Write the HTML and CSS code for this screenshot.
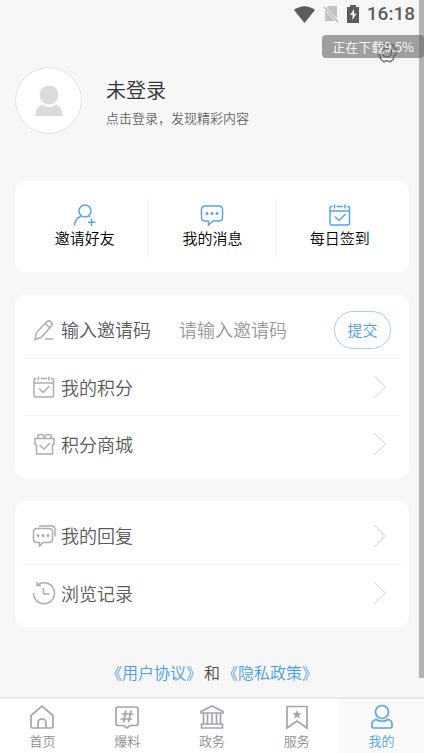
FILE: index.html
```html
<!DOCTYPE html>
<html lang="zh-CN">
<head>
<meta charset="utf-8">
<meta name="viewport" content="width=device-width, initial-scale=1">
<title>我的</title>
<link rel="stylesheet" href="styles.css">
</head>
<body>
<svg class="defs" aria-hidden="true">
  <symbol id="chevron" viewBox="0 0 14 24"><path d="M1 1l11.500 11L1 23"/></symbol>
  <symbol id="calendar" viewBox="0 0 24 24"><path d="M4.500 3.500H3.500Q2 3.500 2 5V20.500q0 1.500 1.500 1.500H20q1.500 0 1.500-1.500V5Q21.500 3.500 20 3.500H19M2 8h19.500M8.500 3.500H15M6.500 1.500v4M17 1.500v4M7 13.500l4 4 6.500-6.500"/></symbol>
</svg>
<div class="app">
  <header class="status">
    <svg width="21" height="17" viewBox="0 0 21 17"><path d="M0 4Q10.500-3.500 21 4L10.500 17z" fill="#5c5c5c"/></svg>
    <svg class="sim" width="16" height="18" viewBox="0 0 16 18"><path d="M5 1h9v15H2V5z" fill="#c3c3c3"/><path d="M0 1l15 16" stroke="#f7f7f7" stroke-width="3"/><path d="M1 2l14 15" stroke="#b0b0b0" stroke-width="1.200"/></svg>
    <svg width="12" height="18" viewBox="0 0 12 18"><path d="M3 0h6v2h3v16H0V2h3z" fill="#5c5c5c"/><path d="M7 4L3 10h2.500v5L9.500 8.500H7z" fill="#f7f7f7"/></svg>
    <span class="time">16:18</span>
  </header>
  <button class="settings" aria-label="设置">
    <svg width="24" height="24" viewBox="0 0 24 24"><path d="M9 2.500Q12 4.500 15 2.500L18 4q0 3.500 3.500 4.500v4.500Q18 14.500 18.500 18l-3.500 3q-3-2.500-6 0l-3.500-3Q6 14.500 2.500 13V8.500Q6 7.500 6 4z"/><circle cx="12" cy="11.500" r="4.500"/></svg>
  </button>
  <div class="toast" role="status">正在下载9.5%</div>
  <main>
    <section class="profile">
      <div class="avatar"><svg width="30" height="32" viewBox="0 0 30 32"><circle cx="15" cy="10" r="9.500"/><path d="M1 31q1-9 7-11.500 7 5 14 0Q28 22 29 31z"/></svg></div>
      <div class="who">
        <h1>未登录</h1>
        <p>点击登录，发现精彩内容</p>
      </div>
    </section>
    <section class="card shortcuts">
      <a href="#"><svg width="24" height="24" viewBox="0 0 24 24"><circle cx="12" cy="8" r="6"/><path d="M1.500 22.500q0-6.500 7-9.500M15.500 13l1.500 1M18.500 15.500v7.500M15 19.200h7.500"/></svg>邀请好友</a>
      <a href="#"><svg width="24" height="24" viewBox="0 0 24 24"><path d="M5 3h14q3.500 0 3.500 3.500v8q0 3.500-3.500 3.500h-6L8.500 22v-4H5q-3.500 0-3.500-3.500v-8Q1.500 3 5 3z"/><path class="dots" d="M7 10.500h.01M12 10.500h.01M17 10.500h.01"/></svg>我的消息</a>
      <a href="#"><svg width="24" height="24"><use href="#calendar"/></svg>每日签到</a>
    </section>
    <section class="card list">
      <form class="row">
        <svg class="icon" width="24" height="24" viewBox="0 0 24 24"><path d="M3 21.500l1.500-7L15 3.500q2-1.500 4 .5t.5 4L9 19.500zM13.500 5.500l4.500 4.500M13 21h8.500"/></svg>
        <label for="code">输入邀请码</label>
        <input id="code" type="text" placeholder="请输入邀请码">
        <button type="button" class="submit">提交</button>
      </form>
      <a class="row" href="#"><svg class="icon" width="24" height="24"><use href="#calendar"/></svg><span>我的积分</span><svg class="chev" width="14" height="24"><use href="#chevron"/></svg></a>
      <a class="row" href="#"><svg class="icon" width="24" height="24" viewBox="0 0 24 24"><path d="M4.500 12.500H3V6.500h19v6h-1.500M4.500 12.500v9.500h16v-9.500M6.500 6.500q-2.500-4 2.500-4 3 0 3.500 4 .5-4 3.500-4 5 0 2.500 4M7.500 13l4.500 4 6-6"/></svg><span>积分商城</span><svg class="chev" width="14" height="24"><use href="#chevron"/></svg></a>
    </section>
    <section class="card list">
      <a class="row" href="#"><svg class="icon" width="24" height="24" viewBox="0 0 24 24"><path d="M5 4.500h12q3.500 0 3.500 3.500v7q0 3.500-3.500 3.500h-6L7.500 22v-3.500H5q-3.500 0-3.500-3.500V8Q1.500 4.500 5 4.500zM7 2h12.500q3.500 0 3.500 3.500v7"/><path class="dots" d="M6 11.500h.01M11 11.500h.01M16 11.500h.01"/></svg><span>我的回复</span><svg class="chev" width="14" height="24"><use href="#chevron"/></svg></a>
      <a class="row" href="#"><svg class="icon" width="24" height="24" viewBox="0 0 24 24"><path d="M1.500 12A10.500 10.500 0 1 0 5.500 4M5 1v3.500h4M11.500 7v6h6"/></svg><span>浏览记录</span><svg class="chev" width="14" height="24"><use href="#chevron"/></svg></a>
    </section>
    <p class="legal"><a href="#">《用户协议》</a>和<a href="#">《隐私政策》</a></p>
  </main>
  <nav>
    <a href="#"><svg width="26" height="26" viewBox="0 0 26 26"><path d="M2 11.500L13 2l11 9.500v11q0 1.500-1.500 1.500h-19Q2 24 2 22.500zM9 24v-5q0-4 4-4t4 4v5"/></svg>首页</a>
    <a href="#"><svg width="26" height="26" viewBox="0 0 26 26"><path d="M4 3h18q2 0 2 2v14.500q0 2-2 2h-6L13 24l-3-2.500H4q-2 0-2-2V5q0-2 2-2zM12 6.500L9.500 18.500M17 6.500l-2.500 12M8 10h11.500M6.500 15h11.500"/></svg>爆料</a>
    <a href="#"><svg width="26" height="26" viewBox="0 0 26 26"><path d="M2 9V7.500L13 2l11 5.500V9zM4.500 9.500v10M8.500 9.500v10M13 9.500v10M17.500 9.500v10M21.500 9.500v10M2.500 20h21v4h-21z"/></svg>政务</a>
    <a href="#"><svg width="26" height="26" viewBox="0 0 26 26"><path d="M3 2.500h20V24l-10-7L3 24z"/><path class="star" d="M13 6l1.300 2.900 3.200.3-2.400 2.100.7 3.200-2.800-1.700-2.800 1.700.7-3.200-2.400-2.100 3.200-.3z"/></svg>服务</a>
    <a href="#" class="active" aria-current="page"><svg width="26" height="26" viewBox="0 0 26 26"><circle cx="13" cy="8" r="6.500"/><path d="M7 15.500q6 3.500 12 0 4 1 4 4.500v2.500q0 1.500-1.500 1.500h-17Q3 24 3 22.500V20q0-3.500 4-4.500z"/></svg>我的</a>
  </nav>
  <div class="scrollbar"></div>
</div>
</body>
</html>
```
FILE: styles.css
```css
* { box-sizing: border-box; }
body {
  margin: 0;
  background: #f7f7f7;
  color: #333;
  font-family: "Noto Sans CJK SC", sans-serif;
  font-weight: 350;
}
a { color: inherit; text-decoration: none; }
button, input { font: inherit; padding: 0; background: none; border: 0; }
h1, p { margin: 0; font-weight: inherit; }
svg { display: block; flex: none; fill: none; }
.defs { position: absolute; width: 0; height: 0; }
.app {
  position: relative;
  display: flex;
  flex-direction: column;
  min-height: 100vh;
}
.status {
  display: flex;
  justify-content: flex-end;
  align-items: center;
  height: 28px;
  padding-right: 9px;
  gap: 8px;
}
.time {
  font: 500 19px/30px Roboto, sans-serif;
  color: #5c5c5c;
}
.settings {
  position: absolute;
  top: 41px;
  right: 25px;
}
.settings svg { stroke: #777; stroke-width: 1.5; }
.toast {
  position: absolute;
  top: 35px;
  right: 0;
  z-index: 2;
  padding: 0 10px;
  border-radius: 4px;
  background: rgba(100, 100, 100, .6);
  color: #fff;
  font-size: 13px;
  line-height: 23px;
}
main { flex: 1; padding: 39px 15px 0; }
.profile { display: flex; align-items: center; gap: 24px; }
.avatar {
  display: grid;
  place-items: center;
  width: 67px;
  height: 67px;
  border: 1px solid #e2e2e2;
  border-radius: 50%;
  background: #fff;
}
.avatar svg { fill: #dbdbdb; }
.who { padding-top: 4px; }
h1 { font-size: 20px; line-height: 30px; }
.profile p { font-size: 13px; line-height: 26px; color: #666; }
.card { background: #fff; border-radius: 11px; }
.shortcuts {
  display: grid;
  grid-template-columns: 1fr 1fr 1fr;
  margin-top: 47px;
  padding: 16px 6px 15px;
}
.shortcuts a {
  display: flex;
  flex-direction: column;
  align-items: center;
  height: 60px;
  padding-top: 6px;
  font-size: 15px;
  line-height: 21px;
  color: #000;
}
.shortcuts a + a { border-left: 1px solid #f5f5f5; }
.shortcuts svg { stroke: #5ba4e2; stroke-width: 1.5; }
.dots { stroke-width: 3; stroke-linecap: round; }
.list { margin-top: 23px; padding: 6px 8px; }
.row {
  display: flex;
  align-items: center;
  height: 57px;
  padding: 0 10px 0 9px;
  font-size: 18px;
  line-height: 26px;
  color: #5a5a5a;
}
.row label, .row span, .row input { padding-bottom: 1px; }
.row + .row { border-top: 1px solid #f5f5f5; }
.icon { margin-right: 5px; stroke: #adadad; stroke-width: 1.5; }
.chev { margin-left: auto; margin-right: 4px; stroke: #d2d2d2; stroke-width: 1; }
input { flex: 1; min-width: 0; margin: 0 16px 0 28px; }
input::placeholder { color: #999; opacity: 1; }
.submit {
  width: 57px;
  height: 38px;
  border: 1px solid #a6d0f4;
  border-radius: 19px;
  font-size: 15px;
  color: #4a9ee3;
}
.legal {
  margin: 33px 0 13px;
  text-align: center;
  font-size: 16px;
  line-height: 24px;
  color: #4a4a4a;
}
.legal a { padding: 0 2px; color: #4a9ee3; }
nav {
  display: grid;
  grid-template-columns: repeat(5, 1fr);
  height: 56px;
  border-top: 2px solid #e9e9e9;
  background: #fff;
}
nav a {
  display: flex;
  flex-direction: column;
  align-items: center;
  padding-top: 5px;
  font-size: 13px;
  line-height: 22px;
  color: #8c8c8c;
}
nav svg { stroke: #a3a3b5; stroke-width: 1.7; }
.star { fill: #a3a3b5; stroke: none; }
nav .active { background: #fafafa; color: #4a9ee3; }
nav .active svg { stroke: #5ba4e2; }
.scrollbar {
  position: absolute;
  top: 0;
  right: 0;
  width: 5px;
  height: 90%;
  background: #b2b2b2;
}
```
